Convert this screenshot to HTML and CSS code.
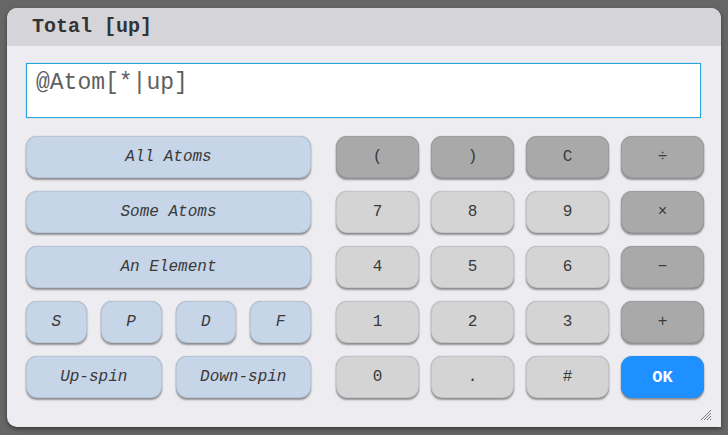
FILE: index.html
```html
<!DOCTYPE html>
<html>
<head>
<meta charset="utf-8">
<link rel="stylesheet" href="styles.css">
</head>
<body>
<div class="dialog">
  <div class="titlebar">Total [up]</div>
  <div class="content">
    <div class="expr">@Atom[*|up]</div>
    <div class="pad">
      <div class="left">
        <button class="key sel wide">All Atoms</button>
        <button class="key sel wide">Some Atoms</button>
        <button class="key sel wide">An Element</button>
        <button class="key sel">S</button>
        <button class="key sel">P</button>
        <button class="key sel">D</button>
        <button class="key sel">F</button>
        <button class="key sel half">Up-spin</button>
        <button class="key sel half">Down-spin</button>
      </div>
      <div class="right">
        <button class="key op">(</button>
        <button class="key op">)</button>
        <button class="key op">C</button>
        <button class="key op">÷</button>
        <button class="key num">7</button>
        <button class="key num">8</button>
        <button class="key num">9</button>
        <button class="key op">×</button>
        <button class="key num">4</button>
        <button class="key num">5</button>
        <button class="key num">6</button>
        <button class="key op">−</button>
        <button class="key num">1</button>
        <button class="key num">2</button>
        <button class="key num">3</button>
        <button class="key op">+</button>
        <button class="key num">0</button>
        <button class="key num">.</button>
        <button class="key num">#</button>
        <button class="key ok">OK</button>
      </div>
    </div>
  </div>
  <svg class="grip" width="12" height="12" viewBox="0 0 12 12">
    <path d="M11 1L1 11M11 4L4 11M11 7L7 11M11 10L10 11" stroke="#777" stroke-width="1" fill="none"/>
  </svg>
</div>
</body>
</html>
```

FILE: styles.css
```css
html, body {
  margin: 0;
  padding: 0;
  background: #666666;
  height: 100%;
}
body {
  padding: 8px 7px 8px 7px;
  box-sizing: border-box;
  font-family: "Liberation Mono", "Courier New", monospace;
}
.dialog {
  position: relative;
  width: 714px;
  height: 419px;
  background: #ececf1;
  border-radius: 10px 10px 0 10px;
  box-shadow: 0 2px 4px rgba(0,0,0,0.45);
  overflow: hidden;
}
.titlebar {
  height: 38px;
  line-height: 38px;
  background: #d5d5d9;
  padding-left: 25px;
  font-size: 20px;
  font-weight: bold;
  color: #333;
}
.content {
  padding: 17px 17px 0 19px;
}
.expr {
  margin-right: 3px;
  background: #fff;
  border: 1px solid #2ba6dc;
  box-shadow: 0 0 1px rgba(43,166,220,0.6);
  padding: 6px 9px 0 9px;
  height: 47px;
  font-size: 23px;
  color: #606060;
  line-height: 26px;
}
.pad {
  display: flex;
  gap: 25px;
  margin-top: 18px;
}
.left {
  width: 285px;
  display: grid;
  grid-template-columns: repeat(4, 1fr);
  grid-auto-rows: 42px;
  gap: 13px 14px;
}
.right {
  width: 368px;
  display: grid;
  grid-template-columns: repeat(4, 1fr);
  grid-auto-rows: 42px;
  gap: 13px 12px;
}
.wide { grid-column: span 4; }
.half { grid-column: span 2; }
.key {
  margin: 0;
  padding: 0;
  border: 1px solid rgba(0,0,0,0.07);
  border-radius: 11px;
  font-family: "Liberation Mono", "Courier New", monospace;
  font-size: 16px;
  color: #3a3a3a;
  box-shadow: 0 2px 2px rgba(0,0,0,0.38), 0 0 1px rgba(0,0,0,0.35);
}
.sel {
  background: #c6d5e8;
  font-style: italic;
}
.op { background: #a9a9a9; }
.num { background: #d4d4d4; }
.ok {
  background: #1e90ff;
  color: #fff;
  font-weight: bold;
  font-size: 17px;
  border-color: #1e90ff;
}
.grip {
  position: absolute;
  right: 9px;
  bottom: 6px;
}
```
